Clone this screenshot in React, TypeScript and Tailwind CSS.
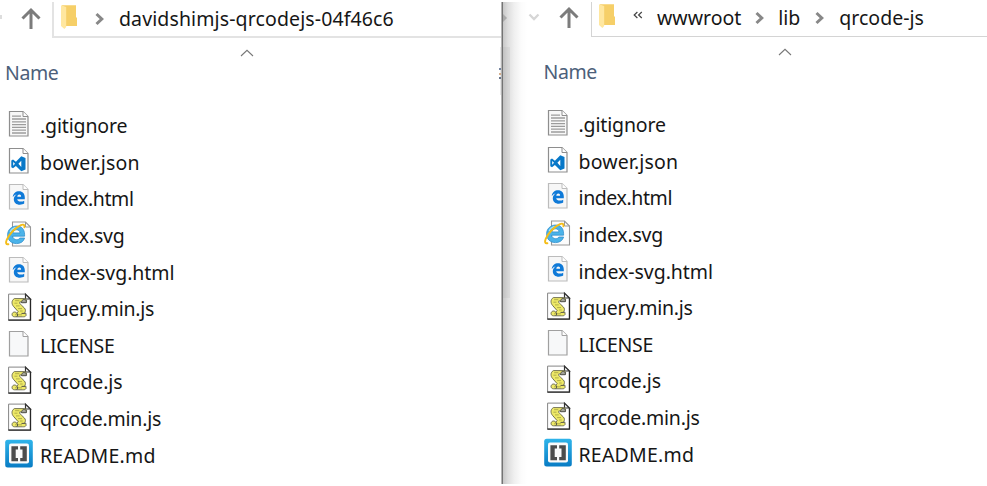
import React from "react";

type IconKind = "text" | "code" | "edge" | "ie" | "script" | "blank" | "brackets";

interface FileEntry {
  name: string;
  icon: IconKind;
  tracking: string;
}

const files: FileEntry[] = [
  { name: ".gitignore", icon: "text", tracking: "tracking-[-0.15px]" },
  { name: "bower.json", icon: "code", tracking: "tracking-[0.15px]" },
  { name: "index.html", icon: "edge", tracking: "tracking-[-0.4px]" },
  { name: "index.svg", icon: "ie", tracking: "tracking-[-0.22px]" },
  { name: "index-svg.html", icon: "edge", tracking: "tracking-[-0.04px]" },
  { name: "jquery.min.js", icon: "script", tracking: "tracking-[-0.25px]" },
  { name: "LICENSE", icon: "blank", tracking: "tracking-[-0.25px]" },
  { name: "qrcode.js", icon: "script", tracking: "tracking-[-0.1px]" },
  { name: "qrcode.min.js", icon: "script", tracking: "tracking-[-0.22px]" },
  { name: "README.md", icon: "brackets", tracking: "tracking-[0.22px]" },
];

function Page({ stroke = "#8e8e8e", fill = "#fff" }: { stroke?: string; fill?: string }) {
  return (
    <>
      <path d="M5.5 2.5H19L24 7.5V27H5.5Z" fill={fill} stroke={stroke} strokeWidth="1.2" />
      <path d="M19 2.5V7.5H24" fill="#fff" stroke={stroke} />
    </>
  );
}

function FileIcon({ kind }: { kind: IconKind }) {
  return (
    <svg viewBox="0 0 30 30" className="h-[30px] w-[30px] shrink-0" fill="none">
      {kind === "text" && (
        <>
          <Page fill="#f8f8f8" />
          <path d="M8 7.2H17M8 10H22M8 12.8H22M8 15.6H22M8 18.4H22M8 21.2H22M8 24H22" stroke="#9c9c9c" strokeWidth="1.3" />
        </>
      )}
      {kind === "blank" && <Page stroke="#a0a0a0" fill="#f7f8f9" />}
      {kind === "code" && (
        <>
          <Page />
          <path
            d="M17.3 10.3 21.5 12V23.6L17.3 25.2 11.9 20 9 22.3 7.3 21.3V14.4L9 13.4 11.9 15.7ZM17.3 14.8 14.4 17.8 17.3 20.9ZM9.2 16V19.7L11 17.8Z"
            fill="#0878c8"
            fillRule="evenodd"
          />
        </>
      )}
      {kind === "edge" && (
        <>
          <Page stroke="#bcbcbc" fill="#f7f7f7" />
          <path
            transform="translate(0 0.6)"
            d="M8.7 14.4C9.3 10.7 11.8 8.7 15 8.7C18.7 8.7 20.8 11.3 20.8 14.7V16.6H13.2C13.4 18.3 14.9 19 16.8 19C18.1 19 19.3 18.7 20.2 18.1V21C19.1 21.8 17.6 22.1 15.9 22.1C12.2 22.1 9.8 20 9.8 16.6C9.8 14.5 11 12.7 12.7 11.8C11.2 12 9.8 13 8.7 14.4ZM13.3 14.1H17.1C17.1 12.7 16.5 11.9 15.3 11.9C14.2 11.9 13.5 12.8 13.3 14.1Z"
            fill="#0f7ad8"
            fillRule="evenodd"
          />
        </>
      )}
      {kind === "ie" && (
        <>
          <path d="M8.5 3H21.5L26.5 8V27H8.5Z" fill="#fcfcfc" stroke="#989898" strokeWidth="1.1" />
          <path d="M21.5 3V8H26.5" stroke="#989898" />
          <path
            d="M20.6 15.7C20.6 10.2 17.5 7 12.8 7C7.6 7 3.6 10.7 3.6 15.9C3.6 21.2 7.3 24.6 12.5 24.6C16.6 24.6 19.7 22.6 20.6 19H15.8C15.2 20.2 14.2 20.7 12.8 20.7C10.4 20.7 8.9 19.3 8.7 17.2H20.6ZM8.9 13.9C9.2 12 10.6 10.8 12.6 10.8C14.6 10.8 15.8 12 16 13.9Z"
            fill="#4bb3e9"
            stroke="#2788c8"
            strokeWidth="0.7"
            fillRule="evenodd"
          />
          <path d="M6.2 13C7.4 10 10 8.6 13 8.7" stroke="#a7e1fa" strokeWidth="1.3" />
          <path d="M4.4 25.2C2 25.7 1.5 23.8 2.7 20.9C5.1 15.1 11.4 8.5 16.9 6.1C19.4 5 20.9 5.8 20.4 8.3" stroke="#f4bd19" strokeWidth="1.9" strokeLinecap="round" />
        </>
      )}
      {kind === "script" && (
        <>
          <path d="M4.6 2.1H21.6L26.4 7V28H4.6Z" fill="#fff" stroke="#858585" />
          <path d="M26.5 7V28.2H4.3" stroke="#262626" strokeWidth="1.3" />
          <path d="M21.5 2.2V7H26.4Z" fill="#fff" stroke="#333" strokeWidth="1.2" />
          <path
            d="M10.3 6.6H20C22.2 6.6 23.3 8.4 22.3 10.5L18.4 10.6 15.9 9.8C15.1 10.8 15.9 12 17.4 13.1L20.2 15.8C21.8 17.3 21.8 19.4 20.5 21.3H22V23.6C21.1 25 19.8 24.8 18.5 24.8H10.5C8.1 24.8 7.3 22.2 8.8 20.7C9.9 19.6 11.8 19.8 12.8 21.1L14.2 19.7 9.5 14.4C7.6 12.2 7.2 8.6 10.3 6.6Z"
            fill="#eee968"
            stroke="#65654b"
            strokeWidth="0.9"
          />
          <path d="M17.5 10.7C17.5 8.4 18.7 7.4 20.2 7.4C21.7 7.4 22.6 8.5 22.3 10.7Z" fill="#a4a49a" stroke="#444" strokeWidth="0.8" />
          <path d="M11.1 8.7H15.3M10.4 11.2H13.5M12 13.9H15.7M14.1 16.6H18M16.1 19H18.7M11 22.8H18" stroke="#aaa744" strokeWidth="0.9" />
          <path d="M12.8 21.1C14.1 22.4 13.7 23.9 12.8 24.7M17.5 21.4H20.8" stroke="#444" strokeWidth="0.9" />
        </>
      )}
      {kind === "brackets" && (
        <>
          <defs>
            <linearGradient id="readmeBlue" x1="0" y1="0" x2="0" y2="1">
              <stop stopColor="#2fb4ea" />
              <stop offset="1" stopColor="#087cc4" />
            </linearGradient>
          </defs>
          <rect x="1.2" y="1.8" width="27.6" height="27.6" rx="2.5" fill="url(#readmeBlue)" />
          <rect x="5" y="5.6" width="20" height="20" rx="2" fill="#fafafa" />
          <path d="M7.4 8.3H14V11.4H11.7V20.1H14V23.2H7.4ZM16.2 8.3H22.8V23.2H16.2V20.1H18.5V11.4H16.2Z" fill="#4c4c4c" />
        </>
      )}
    </svg>
  );
}

function UpArrow() {
  return (
    <svg viewBox="0 0 22 24" className="h-6 w-[22px] shrink-0" fill="none">
      <path d="M11 22V3.5M2.5 11.5L11 3L19.5 11.5" stroke="#7c7c7c" strokeWidth="3" />
    </svg>
  );
}

function FolderIcon() {
  return (
    <svg viewBox="0 0 18 26" className="h-[26px] w-[18px] shrink-0">
      <path d="M2 1.2H16V13L17 14V22H3Z" fill="#f6cf68" />
      <path d="M1 1.3L6.2 3V23L4.4 25L1 22Z" fill="#ffe7a0" />
    </svg>
  );
}

function Chevron() {
  return (
    <svg viewBox="0 0 10 14" className="h-[14px] w-[10px] shrink-0" fill="none">
      <path d="M1.5 2L6.8 7L1.5 12" stroke="#888" strokeWidth="3" />
    </svg>
  );
}

function SortMark({ className }: { className: string }) {
  return (
    <svg viewBox="0 0 14 8" className={`block h-2 w-[14px] ${className}`} fill="none">
      <path d="M1 7L7 1.3L13 7" stroke="#777" strokeWidth="1.1" />
    </svg>
  );
}

function FileList() {
  return (
    <ul>
      {files.map((file) => (
        <li key={file.name} className="flex h-[36.6px] items-center">
          <FileIcon kind={file.icon} />
          <span className={`ml-[6px] pt-[4.4px] leading-7 whitespace-nowrap ${file.tracking}`}>{file.name}</span>
        </li>
      ))}
    </ul>
  );
}

export default function App() {
  return (
    <div className="h-[486px] w-[987px] overflow-hidden bg-white py-0.5 font-['Noto_Sans','Open_Sans',sans-serif] text-[19.5px] text-[#161616]">
      <div className="flex h-[482px]">
        <section className="relative w-[501px] shrink-0">
          <div className="flex h-9">
            <div className="mt-[13px] h-1 w-0.5 bg-[#ddd]" />
            <div className="mt-[5px] ml-[18px]">
              <UpArrow />
            </div>
            <div className="ml-[10px] flex flex-1 border-b-2 border-l-2 border-[#e3e3e3]">
              <div className="ml-[6px] mt-0.5">
                <FolderIcon />
              </div>
              <div className="mt-[10px] ml-[17px]">
                <Chevron />
              </div>
              <span className="mt-[3px] ml-[14px] leading-7 tracking-[0.12px] whitespace-nowrap">davidshimjs-qrcodejs-04f46c6</span>
            </div>
          </div>
          <div className="h-[67.7px]">
            <SortMark className="relative top-[11px] left-[240px]" />
            <div className="mt-[13px] ml-[5px] leading-7 tracking-[-0.4px] text-[#4c607a]">Name</div>
          </div>
          <div className="pl-1">
            <FileList />
          </div>
          <div className="absolute top-[45px] right-0 h-12 w-px bg-[#e9e9e9]" />
          <div className="absolute top-[66px] right-0 flex h-[11px] w-0.5 flex-col justify-between">
            <i className="h-0.5 bg-[#7584a0]" />
            <i className="h-0.5 bg-[#d4ae8c]" />
            <i className="h-0.5 bg-[#68758b]" />
          </div>
        </section>
        <section className="relative flex-1 bg-[linear-gradient(90deg,#b5b5b5_0px,#b5b5b5_1px,#747474_1px,#747474_2px,#c8c8c8_2px,#dedede_7px,#efefef_13px,#fbfbfb_20px,#ffffff_26px)]">
          <div className="absolute top-[12px] left-0.5 h-0 w-0 border-y-4 border-l-4 border-y-transparent border-l-[#aaa]" />
          <div className="absolute top-[45px] left-0.5 h-[251px] w-[7px] bg-[#888]/10" />
          <div className="flex h-[34.5px]">
            <svg viewBox="0 0 12 8" className="mt-[11px] ml-[27px] h-2 w-3" fill="none">
              <path d="M1.5 1.5L6 6L10.5 1.5" stroke="#d6d6d6" strokeWidth="2.3" />
            </svg>
            <div className="mt-1 ml-[18px]">
              <UpArrow />
            </div>
            <div className="ml-[11px] flex flex-1 border-b border-l border-[#d4d4d4]">
              <div className="mt-px ml-[6px]">
                <FolderIcon />
              </div>
              <svg viewBox="0 0 10 8" className="mt-[9px] ml-[17px] h-2 w-[10px]" fill="none">
                <path d="M4.4 1L1.2 4L4.4 7M8.8 1L5.6 4L8.8 7" stroke="#444" strokeWidth="1.2" />
              </svg>
              <span className="mt-0.5 ml-[14px] leading-7">wwwroot</span>
              <div className="mt-[9px] ml-[14px]">
                <Chevron />
              </div>
              <span className="mt-0.5 ml-[13px] leading-7">lib</span>
              <div className="mt-[9px] ml-[15px]">
                <Chevron />
              </div>
              <span className="mt-0.5 ml-[14px] leading-7">qrcode-js</span>
            </div>
          </div>
          <div className="h-[68.2px]">
            <SortMark className="relative top-[11px] left-[277px]" />
            <div className="mt-[13px] ml-[42.5px] leading-7 tracking-[-0.4px] text-[#4c607a]">Name</div>
          </div>
          <div className="pl-[41.5px]">
            <FileList />
          </div>
        </section>
      </div>
    </div>
  );
}
